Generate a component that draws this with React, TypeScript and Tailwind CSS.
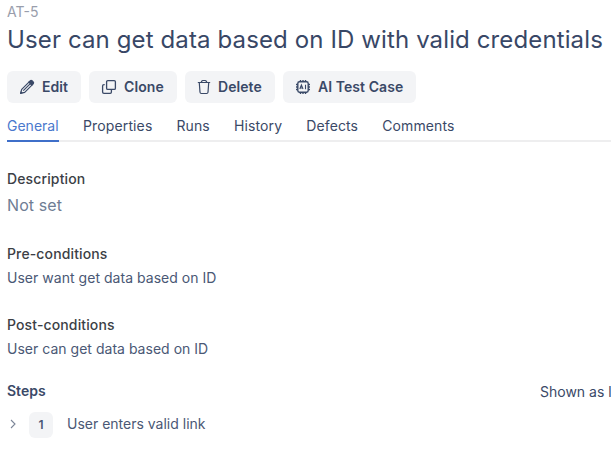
import React from "react";

const buttonClass = "flex h-8 items-center rounded-md bg-[#f3f4f6] pl-3 gap-[7px] whitespace-nowrap text-sm font-semibold text-[#3a4967]";

function Section({ title, children, className }: { title: string; children: React.ReactNode; className: string }) {
  return (
    <section className={className}>
      <h2 className="h-5 text-sm leading-5 font-medium tracking-[0.13px] text-[#3c3f46]">{title}</h2>
      {children}
    </section>
  );
}

function PenIcon() {
  return (
    <svg width="16" height="16" viewBox="0 0 16 16" fill="none" stroke="currentColor" strokeWidth="1.2" strokeLinejoin="round">
      <path d="m1.6 14.4 1.1-4.1 7.5-7.5 3 3-7.5 7.5Z M4.3 11.7l7.3-7.3" />
      <path fill="currentColor" d="m9.8 3.2 1.4-1.4a1.3 1.3 0 0 1 1.8 0l1.2 1.2a1.3 1.3 0 0 1 0 1.8l-1.4 1.4Z" />
      <path fill="currentColor" stroke="none" d="m1 15 .9-3 2.1 2.1Z" />
    </svg>
  );
}

function CloneIcon() {
  return (
    <svg width="16" height="16" viewBox="0 0 16 16" fill="none" stroke="currentColor" strokeWidth="1.3" strokeLinejoin="round">
      <rect x="5.6" y="1.6" width="8.8" height="8.8" rx="1.2" />
      <path d="M10.4 10.4v2.7c0 .7-.5 1.3-1.2 1.3H3c-.8 0-1.4-.6-1.4-1.3V7c0-.8.6-1.4 1.4-1.4h.7" />
    </svg>
  );
}

function TrashIcon() {
  return (
    <svg width="14" height="16" viewBox="0 0 14 16" fill="none" stroke="currentColor" strokeWidth="1.2" strokeLinejoin="round" strokeLinecap="round">
      <path d="M1.3 3.5h11.4M4.2 3.3 5 1.9c.2-.3.4-.4.7-.4h2.6c.3 0 .5.1.7.4l.8 1.4M2.3 3.7l.7 9.5c.1.8.6 1.3 1.3 1.3h5.4c.7 0 1.2-.5 1.3-1.3l.7-9.5" />
    </svg>
  );
}

function ChipIcon() {
  return (
    <svg width="16" height="16" viewBox="0 0 16 16" fill="none" stroke="currentColor" strokeWidth="1.4">
      <rect x="2.8" y="2.8" width="10.4" height="10.4" rx="1.6" />
      <path d="M5.5 1v1.8M8 1v1.8M10.5 1v1.8M5.5 13.2V15M8 13.2V15M10.5 13.2V15M1 5.5h1.8M1 8h1.8M1 10.5h1.8M13.2 5.5H15M13.2 8H15M13.2 10.5H15" />
      <path strokeWidth="1.1" d="m4.8 10 1.6-4 1.6 4M5.4 9h2M10.5 5.8v4.4" />
    </svg>
  );
}

export default function App() {
  return (
    <main className="h-[461px] w-[611px] overflow-hidden bg-white pl-[7px] font-['Inter',sans-serif] text-[#4a5875]">
      <div className="h-6 pt-[2px] text-sm leading-5 text-[#999eac]">AT-5</div>
      <h1 className="h-[47px] whitespace-nowrap text-2xl leading-8 tracking-[0.12px] text-[#384766]">User can get data based on ID with valid credentials</h1>
      <div className="flex gap-2">
        <button className={`${buttonClass} w-[74px]`}><PenIcon />Edit</button>
        <button className={`${buttonClass} w-[88px] tracking-[0.1px]`}><CloneIcon />Clone</button>
        <button className={`${buttonClass} w-[90px] tracking-[0.06px]`}><TrashIcon />Delete</button>
        <button className={`${buttonClass} w-[133px] tracking-[0.06px]`}><ChipIcon />AI Test Case</button>
      </div>
      <nav className="mt-[11px] flex h-7 gap-6 border-b-2 border-[#eeeeef] text-sm leading-6 tracking-[0.13px] text-[#3a4967]">
        <span className="h-7 w-[52px] border-b-2 border-[#3f6fc9] tracking-normal text-[#4a78cd]">General</span>
        <span>Properties</span><span>Runs</span><span>History</span><span>Defects</span><span>Comments</span>
      </nav>
      <Section title="Description" className="mt-[27px] h-[75px]">
        <p className="mt-1 text-base leading-6 tracking-[0.08px] text-[#6f7d94]">Not set</p>
      </Section>
      <Section title="Pre-conditions" className="h-[71px]">
        <p className="mt-1 text-sm leading-5 tracking-[0.03px]">User want get data based on ID</p>
      </Section>
      <Section title="Post-conditions" className="h-[66px]">
        <p className="mt-1 text-sm leading-5 tracking-[0.02px]">User can get data based on ID</p>
      </Section>
      <div className="flex h-[31px] justify-between text-sm leading-5">
        <h2 className="font-semibold text-[#3a4967]">Steps</h2>
        <span className="mt-px w-[71px] whitespace-nowrap text-[#3a4967]">Shown as l</span>
      </div>
      <div className="flex items-center">
        <svg className="mb-[2px]" width="12" height="12" viewBox="0 0 12 12" fill="none" stroke="#7c8698" strokeWidth="1.1"><path d="m4 2 4 4-4 4" /></svg>
        <span className="ml-[10px] flex h-[26px] w-6 items-center justify-center rounded-md bg-[#f3f4f6] text-xs font-semibold">1</span>
        <span className="mb-[2px] ml-[14px] text-sm">User enters valid link</span>
      </div>
    </main>
  );
}
